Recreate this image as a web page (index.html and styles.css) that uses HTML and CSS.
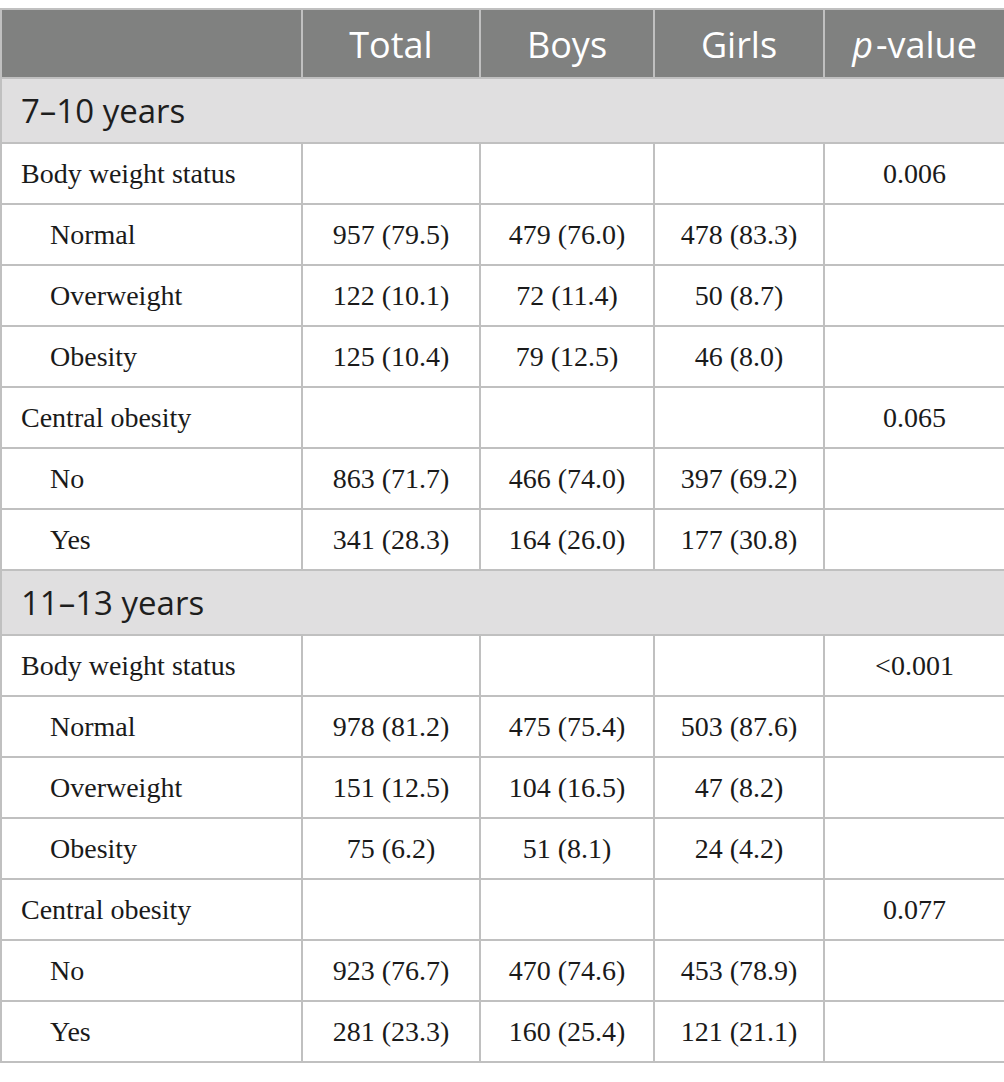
FILE: index.html
```html
<!DOCTYPE html>
<html lang="en">
<head>
  <meta charset="UTF-8">
  <title>Table</title>
  <link rel="stylesheet" href="styles.css">
</head>
<body>
  <table class="data">
    <colgroup>
      <col class="c-label">
      <col class="c-total">
      <col class="c-boys">
      <col class="c-girls">
      <col class="c-p">
    </colgroup>
    <thead>
      <tr class="head">
        <th></th>
        <th>Total</th>
        <th>Boys</th>
        <th>Girls</th>
        <th><i>p</i>-value</th>
      </tr>
    </thead>
    <tbody>
      <tr class="section"><td colspan="5">7–10 years</td></tr>
      <tr><td>Body weight status</td><td></td><td></td><td></td><td>0.006</td></tr>
      <tr><td class="sub">Normal</td><td>957 (79.5)</td><td>479 (76.0)</td><td>478 (83.3)</td><td></td></tr>
      <tr><td class="sub">Overweight</td><td>122 (10.1)</td><td>72 (11.4)</td><td>50 (8.7)</td><td></td></tr>
      <tr><td class="sub">Obesity</td><td>125 (10.4)</td><td>79 (12.5)</td><td>46 (8.0)</td><td></td></tr>
      <tr><td>Central obesity</td><td></td><td></td><td></td><td>0.065</td></tr>
      <tr><td class="sub">No</td><td>863 (71.7)</td><td>466 (74.0)</td><td>397 (69.2)</td><td></td></tr>
      <tr><td class="sub">Yes</td><td>341 (28.3)</td><td>164 (26.0)</td><td>177 (30.8)</td><td></td></tr>
      <tr class="section"><td colspan="5">11–13 years</td></tr>
      <tr><td>Body weight status</td><td></td><td></td><td></td><td>&lt;0.001</td></tr>
      <tr><td class="sub">Normal</td><td>978 (81.2)</td><td>475 (75.4)</td><td>503 (87.6)</td><td></td></tr>
      <tr><td class="sub">Overweight</td><td>151 (12.5)</td><td>104 (16.5)</td><td>47 (8.2)</td><td></td></tr>
      <tr><td class="sub">Obesity</td><td>75 (6.2)</td><td>51 (8.1)</td><td>24 (4.2)</td><td></td></tr>
      <tr><td>Central obesity</td><td></td><td></td><td></td><td>0.077</td></tr>
      <tr><td class="sub">No</td><td>923 (76.7)</td><td>470 (74.6)</td><td>453 (78.9)</td><td></td></tr>
      <tr><td class="sub">Yes</td><td>281 (23.3)</td><td>160 (25.4)</td><td>121 (21.1)</td><td></td></tr>
    </tbody>
  </table>
</body>
</html>
```

FILE: styles.css
```css
*{
  margin: 0;
  padding: 0;
}
body{
  background: #fff;
  padding-top: 8px;
}
.data{
  width: 1004px;
  border-collapse: collapse;
  table-layout: fixed;
  font-family: "Liberation Serif", "DejaVu Serif", serif;
  font-size: 28px;
  color: #1a1a1a;
}
.c-label{ width: 301px; }
.c-total{ width: 178px; }
.c-boys{ width: 174px; }
.c-girls{ width: 170px; }
.c-p{ width: 181px; }
.data td,.data th{
  border: 2px solid #c0c0c0;
  height: 61px;
  box-sizing: border-box;
  text-align: center;
  vertical-align: middle;
  padding: 0;
}
.data td:first-child{
  text-align: left;
  padding-left: 19px;
}
.data td.sub{
  padding-left: 48px;
}
.head th{
  height: 69px;
  background: #808180;
  color: #fff;
  font-family: "Open Sans", "Noto Sans", sans-serif;
  font-weight: normal;
  font-size: 36px;
  padding-top: 2px;
}
.head th i{
  padding-right: 3px;
}
.section td{
  height: 65px;
  background: #e0dfe0;
  font-family: "Open Sans", "Noto Sans", sans-serif;
  font-size: 33px;
  color: #1e1e1e;
}
.data .section td:first-child{
  padding-left: 19px;
}
```
